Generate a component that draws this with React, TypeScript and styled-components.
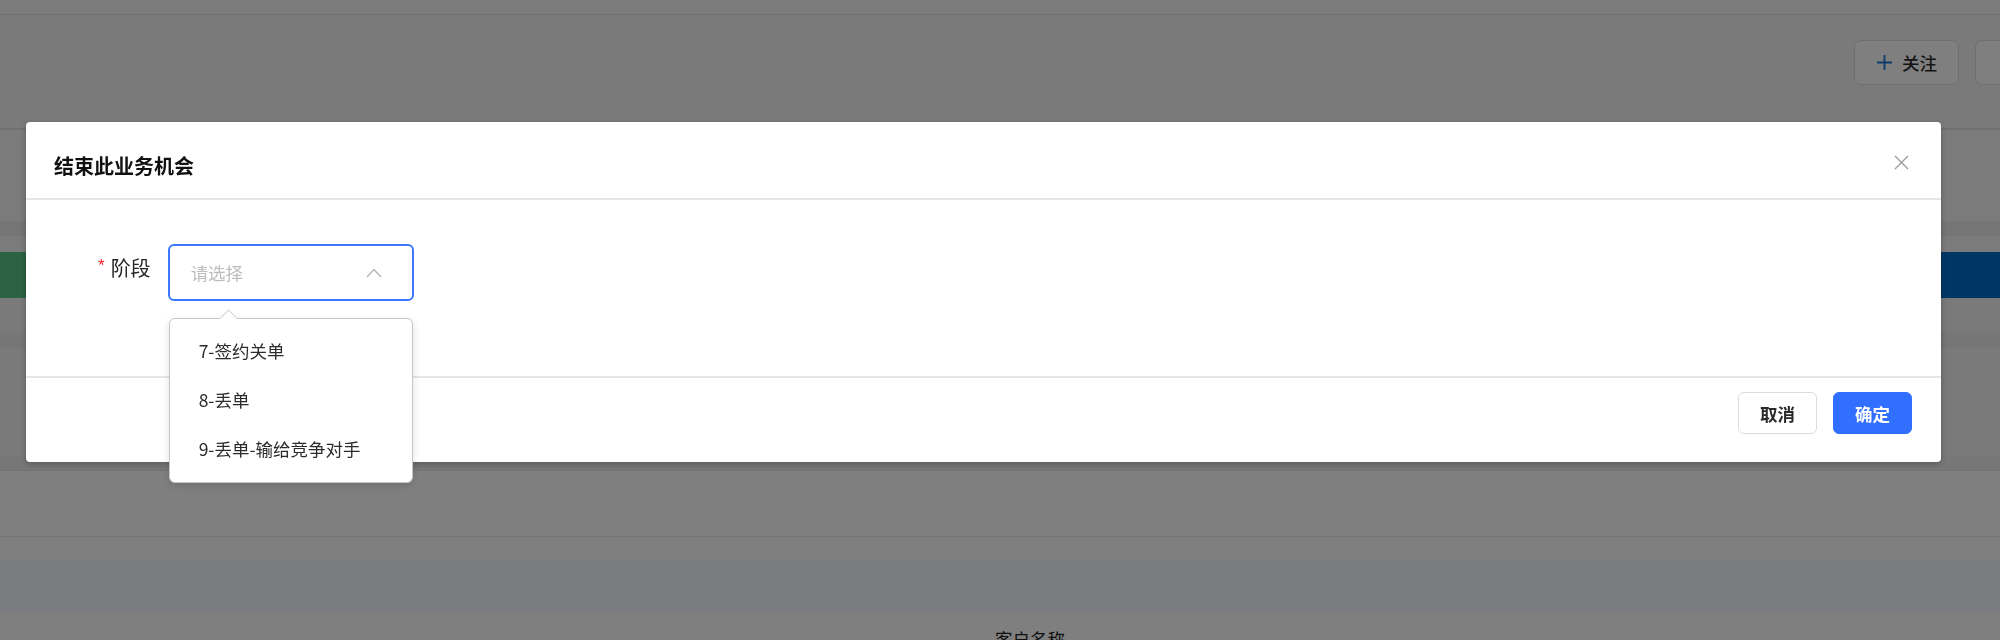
import { createGlobalStyle, styled } from "styled-components";

const GlobalStyle = createGlobalStyle`
  html, body {
    margin: 0;
    padding: 0;
    width: 2000px;
    height: 640px;
    overflow: hidden;
    background: #fefefe;
    font-family: "Noto Sans CJK SC", "Noto Sans", sans-serif;
    color: #262626;
  }
  * {
    box-sizing: border-box;
  }
`;

const Page = styled.div`
  width: 2000px;
  height: 640px;
  display: flex;
  flex-direction: column;
  overflow: hidden;
`;

const Band = styled.div<{ $h: number; $bg: string; $line?: string }>`
  flex: none;
  height: ${(p) => p.$h}px;
  background: ${(p) => p.$bg};
  border-bottom: ${(p) => (p.$line ? `1px solid ${p.$line}` : "none")};
`;

const Header = styled.div`
  flex: none;
  height: 115px;
  background: #f4f4f4;
  border-bottom: 2px solid #e2e2e2;
  display: flex;
  justify-content: flex-end;
  align-items: flex-start;
  padding-top: 25px;
`;

const Toolbar = styled.div`
  display: flex;
  gap: 16px;
  margin-right: -80px;
`;

const GhostButton = styled.button`
  height: 45px;
  width: 105px;
  display: flex;
  align-items: center;
  justify-content: center;
  gap: 9px;
  background: #fefefe;
  border: 1px solid #dedede;
  border-radius: 7px;
  font-family: inherit;
  font-size: 17.5px;
  font-weight: 500;
  color: #2a2a2a;
`;

const Steps = styled.div`
  flex: none;
  height: 46px;
  display: flex;
`;

const Step = styled.div<{ $bg: string }>`
  flex: 1;
  background: ${(p) => p.$bg};
`;

const BottomRow = styled.div`
  flex: none;
  height: 40px;
  display: flex;
  justify-content: center;
  padding-top: 14px;
  padding-left: 60px;
  font-size: 17.5px;
  color: #222;
`;

const Overlay = styled.div`
  position: fixed;
  inset: 0;
  background: rgba(0, 0, 0, 0.5);
`;

const Modal = styled.div`
  position: absolute;
  left: 26px;
  top: 122px;
  width: 1915px;
  background: #fff;
  border-radius: 4px;
  box-shadow: 0 2px 6px rgba(0, 0, 0, 0.25);
  display: flex;
  flex-direction: column;
`;

const ModalHeader = styled.div`
  height: 78px;
  display: flex;
  align-items: center;
  justify-content: space-between;
  padding: 0 32px 0 28px;
  border-bottom: 2px solid #e6e6e6;
`;

const Title = styled.div`
  font-size: 20px;
  font-weight: 700;
  color: #111;
  padding-top: 10px;
`;

const Close = styled.button`
  border: none;
  background: none;
  padding: 0;
  display: flex;
  margin-top: 4px;
`;

const ModalBody = styled.div`
  height: 176px;
  padding: 44px 0 0 72px;
`;

const FormRow = styled.div`
  display: flex;
  align-items: center;
  gap: 17px;
`;

const Label = styled.label`
  display: flex;
  align-items: center;
  gap: 6px;
  font-size: 20px;
  color: #262626;
  margin-top: -10px;
`;

const Star = styled.span`
  color: #f5222d;
  font-size: 17px;
  font-family: "Liberation Sans", sans-serif;
  margin-top: -4px;
`;

const SelectWrap = styled.div`
  position: relative;
`;

const SelectBox = styled.div`
  width: 246px;
  height: 57px;
  border: 2px solid #3a78ff;
  border-radius: 6px;
  display: flex;
  align-items: center;
  justify-content: space-between;
  padding: 0 30px 0 21px;
`;

const Placeholder = styled.span`
  font-size: 17.5px;
  color: #bdbdbd;
`;

const Dropdown = styled.ul`
  position: absolute;
  left: 1px;
  top: calc(100% + 17px);
  width: 244px;
  margin: 0;
  padding: 7px 0 9px;
  list-style: none;
  background: #fff;
  border: 1px solid #c6c6c6;
  border-radius: 6px;
  box-shadow: 0 3px 8px rgba(0, 0, 0, 0.12);
  z-index: 2;

  &::before {
    content: "";
    position: absolute;
    left: 52px;
    top: -7px;
    width: 12px;
    height: 12px;
    background: #fff;
    border-left: 1px solid #d6d6d6;
    border-top: 1px solid #d6d6d6;
    transform: rotate(45deg);
  }
`;

const Option = styled.li`
  height: 49px;
  display: flex;
  align-items: center;
  padding-left: 29px;
  font-size: 17.5px;
  color: #2b2b2b;
`;

const ModalFooter = styled.div`
  border-top: 2px solid #e6e6e6;
  display: flex;
  justify-content: flex-end;
  gap: 16px;
  padding: 14px 29px 28px;
`;

const Button = styled.button<{ $primary?: boolean }>`
  width: 79px;
  height: 42px;
  border-radius: 6px;
  font-family: inherit;
  font-size: 17.5px;
  font-weight: 600;
  border: 1px solid ${(p) => (p.$primary ? "#306fff" : "#dcdcdc")};
  background: ${(p) => (p.$primary ? "#306fff" : "#fff")};
  color: ${(p) => (p.$primary ? "#fff" : "#2a2a2a")};
`;

const options = ["7-签约关单", "8-丢单", "9-丢单-输给竞争对手"];

export default function App() {
  return (
    <>
      <GlobalStyle />
      <Page>
        <Band $h={15} $bg="#f6f6f6" $line="#e0e0e0" />
        <Header>
          <Toolbar>
            <GhostButton>
              <svg width="17" height="17" viewBox="0 0 17 17">
                <path d="M8.5 1v15M1 8.5h15" stroke="#1a78d6" strokeWidth="1.8" />
              </svg>
              关注
            </GhostButton>
            <GhostButton>编辑</GhostButton>
          </Toolbar>
        </Header>
        <Band $h={91} $bg="#f6f6f6" />
        <Band $h={15} $bg="#eaeaea" />
        <Band $h={16} $bg="#f6f6f6" />
        <Steps>
          <Step $bg="#55c486" />
          <Step $bg="#006cc8" />
        </Steps>
        <Band $h={35} $bg="#f4f4f4" />
        <Band $h={15} $bg="#ececec" />
        <Band $h={107} $bg="#f4f4f4" />
        <Band $h={16} $bg="#eeeeee" $line="#e4e4e4" />
        <Band $h={66} $bg="#fefefe" $line="#e6e6e6" />
        <Band $h={23} $bg="#fefefe" />
        <Band $h={52} $bg="#f6f8ff" />
        <BottomRow>客户名称</BottomRow>
      </Page>
      <Overlay>
        <Modal>
          <ModalHeader>
            <Title>结束此业务机会</Title>
            <Close>
              <svg width="15" height="15" viewBox="0 0 15 15">
                <path d="M1 1l13 13M14 1L1 14" stroke="#9a9a9a" strokeWidth="1.3" />
              </svg>
            </Close>
          </ModalHeader>
          <ModalBody>
            <FormRow>
              <Label>
                <Star>*</Star>
                阶段
              </Label>
              <SelectWrap>
                <SelectBox>
                  <Placeholder>请选择</Placeholder>
                  <svg width="16" height="10" viewBox="0 0 16 10">
                    <path d="M1 9l7-7.5L15 9" fill="none" stroke="#b5b5b5" strokeWidth="1.4" />
                  </svg>
                </SelectBox>
                <Dropdown>
                  {options.map((o) => (
                    <Option key={o}>{o}</Option>
                  ))}
                </Dropdown>
              </SelectWrap>
            </FormRow>
          </ModalBody>
          <ModalFooter>
            <Button>取消</Button>
            <Button $primary>确定</Button>
          </ModalFooter>
        </Modal>
      </Overlay>
    </>
  );
}
